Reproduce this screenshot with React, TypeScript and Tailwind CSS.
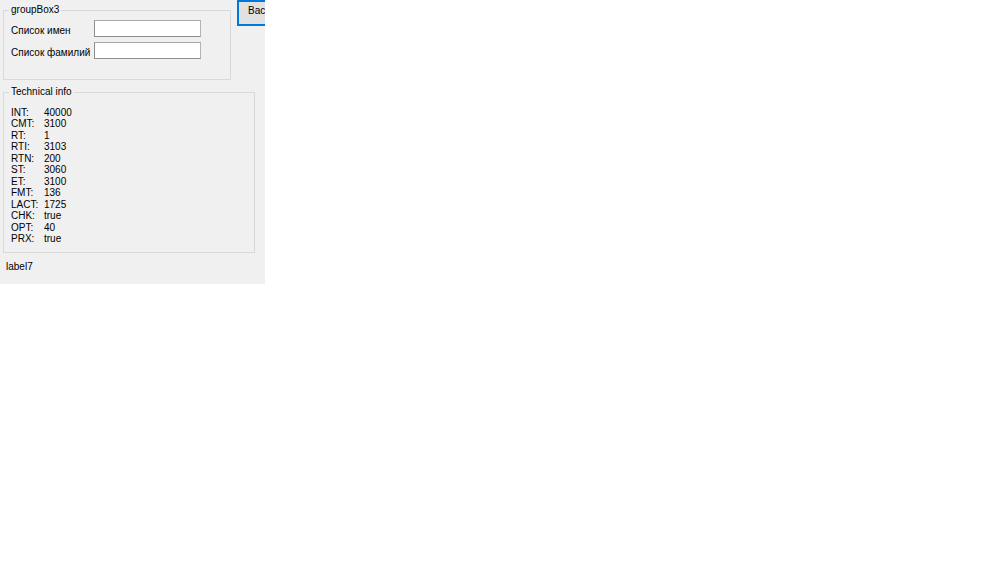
import React from 'react';

// tech values shown in the "Technical info" group
const techInfo: [string, string][] = [
  ['INT:', '40000'],
  ['CMT:', '3100'],
  ['RT:', '1'],
  ['RTI:', '3103'],
  ['RTN:', '200'],
  ['ST:', '3060'],
  ['ET:', '3100'],
  ['FMT:', '136'],
  ['LACT:', '1725'],
  ['CHK:', 'true'],
  ['OPT:', '40'],
  ['PRX:', 'true'],
];

const TextBox = () => (
  <div className="w-[107px] h-[17px] bg-white border border-[#8f8f8f] border-t-[#a8a8a8] border-r-[#b4b4b4]" />
);

export default function App() {
  return (
    <div className="w-[1000px] h-[563px] bg-white">
      <div className="w-[265px] h-[284px] bg-[#f0f0f0] overflow-hidden font-['Liberation_Sans',Arial,sans-serif] text-[10px] leading-[13px] text-black whitespace-nowrap">
        <div className="flex items-start">
          {/* groupBox3 */}
          <fieldset className="ml-[3px] mt-[3px] w-[228px] h-[77px] shrink-0 border border-[#d9d9d9]">
            <legend className="ml-[5px] px-[2px] leading-[14px]">groupBox3</legend>
            <div className="flex flex-col gap-[5px] mt-[3px]">
              <div className="flex items-start">
                <span className="w-[90px] pl-[7px] pt-[4px]">Список имен</span>
                <TextBox />
              </div>
              <div className="flex items-start">
                <span className="w-[90px] pl-[7px] pt-[4px]">Список фамилий</span>
                <TextBox />
              </div>
            </div>
          </fieldset>

          <button className="ml-[6px] w-[75px] h-[26px] shrink-0 border-2 border-[#0078d7] bg-[#e1e1e1] pl-[9px] pt-[2px] text-left flex items-start">
            Вас
          </button>
        </div>

        {/* Technical info */}
        <fieldset className="ml-[3px] mt-[5px] w-[252px] h-[168px] border border-[#d9d9d9]">
          <legend className="ml-[5px] px-[2px] leading-[14px]">Technical info</legend>
          <div className="grid grid-cols-[33px_auto] pl-[7px] pt-[8px] leading-[11.45px]">
            {techInfo.map(([k, v]) => (
              <React.Fragment key={k}>
                <span>{k}</span>
                <span>{v}</span>
              </React.Fragment>
            ))}
          </div>
        </fieldset>

        <div className="ml-[6px] mt-[7px]">label7</div>
      </div>
    </div>
  );
}
